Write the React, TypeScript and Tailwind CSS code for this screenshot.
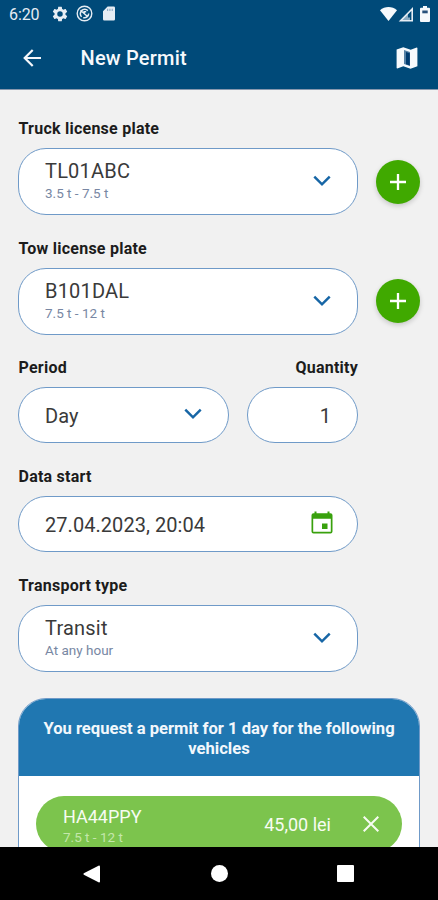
import React from "react";

type IconProps = { className?: string };

function Chevron({ className = "" }: IconProps) {
  return (
    <svg className={className} width="18" height="12" viewBox="0 0 18 12" fill="none" stroke="#1766a6" strokeWidth="2.5">
      <path d="M1.3 1.6 9 9.3l7.7-7.7" />
    </svg>
  );
}

function StatusBar() {
  return (
    <div className="flex h-7 items-center pl-[9px] pr-[8px] text-[#e6edf4]">
      <span className="mt-px w-[31px] whitespace-nowrap text-[16px] leading-7 tracking-[-0.1px]">6:20</span>
      <svg className="ml-[12px] -mt-px" width="16" height="16" viewBox="1.500 1.500 21 21" fill="currentColor">
        <path fillRule="evenodd" d="M19.14 12.94c.04-.3.06-.61.06-.94 0-.32-.02-.64-.07-.94l2.03-1.58a.49.49 0 0 0 .12-.61l-1.92-3.32a.488.488 0 0 0-.59-.22l-2.39.96c-.5-.38-1.03-.7-1.62-.94l-.36-2.54a.484.484 0 0 0-.48-.41h-3.84c-.24 0-.43.17-.47.41l-.36 2.54c-.59.24-1.13.57-1.62.94l-2.39-.96a.48.48 0 0 0-.59.22L2.74 8.87c-.12.21-.08.47.12.61l2.03 1.58c-.05.3-.09.63-.09.94s.02.64.07.94l-2.03 1.58a.49.49 0 0 0-.12.61l1.92 3.32c.12.22.37.29.59.22l2.39-.96c.5.38 1.03.7 1.62.94l.36 2.54c.05.24.24.41.48.41h3.84c.24 0 .44-.17.47-.41l.36-2.54c.59-.24 1.13-.56 1.62-.94l2.39.96c.22.08.47 0 .59-.22l1.92-3.32c.12-.22.07-.47-.12-.61l-2.01-1.58zM12 15.6A3.6 3.6 0 1 1 12 8.4a3.6 3.6 0 0 1 0 7.2z" />
      </svg>
      <svg className="ml-[8px] -mt-px" width="17" height="17" viewBox="0 0 17 17" fill="none" stroke="currentColor">
        <circle cx="8.5" cy="8.5" r="7.3" strokeWidth="1.4" />
        <path d="M5.600 11.800A4.300 4.300 0 1 1 11.800 5.600M12.700 8.500a4.300 4.300 0 0 1-5.500 4.100M4.500 5.200l7.300 6.600M8.200 8.800V6.800h2" strokeWidth="1.500" />
      </svg>
      <svg className="ml-[10px] -mt-px" width="12" height="15" viewBox="0 0 13 15">
        <path d="M5 0h6.6A1.4 1.4 0 0 1 13 1.4v12.2a1.4 1.4 0 0 1-1.4 1.4H1.4A1.4 1.4 0 0 1 0 13.6V5z" fill="currentColor" />
        <path d="M5 2.3v2.500M7.5 2.3v2.500M10 2.3v2.500" stroke="#8ba9c4" strokeWidth="1.2" />
      </svg>
      <div className="ml-auto flex items-center">
        <svg width="17" height="14" viewBox="0 0 17 14">
          <path d="M0 3.3C4.8-1.1 12.2-1.1 17 3.3L8.5 14z" fill="#f6f9fc" />
        </svg>
        <svg className="ml-px" width="16" height="15" viewBox="0 0 16 15">
          <path d="M14.200 2v11.800H2.600z" fill="none" stroke="currentColor" strokeWidth="1.6" />
          <path d="M2 14 10 6v4.500h2V14z" fill="currentColor" opacity=".6" />
        </svg>
        <svg className="ml-[6px] -mt-px" width="10" height="16" viewBox="0 0 10 16">
          <path d="M3 0h4v1.8h2a1 1 0 0 1 1 1V15a1 1 0 0 1-1 1H1a1 1 0 0 1-1-1V2.800a1 1 0 0 1 1-1h2z" fill="#f6f9fc" />
          <path d="M2.300 4.500h5.400v2.800H2.300z" fill="#27507b" />
        </svg>
      </div>
    </div>
  );
}

function Label({ children }: { children: React.ReactNode }) {
  return <div className="h-5 whitespace-nowrap pl-[0.500px] text-[16px] font-bold leading-5 tracking-[0.240px] text-[#1c1c1c]">{children}</div>;
}

function SelectBox({ title, note }: { title: string; note: string }) {
  return (
    <div className="flex h-[67px] w-[340px] items-center justify-between rounded-[28px] border border-[#6f9ac8] bg-white pl-[26px] pr-[26px]">
      <div className="-mt-px">
        <div className="whitespace-nowrap text-[20px] leading-6 tracking-[0.2px] text-[#3a3a3a]">{title}</div>
        <div className="whitespace-nowrap text-[13.5px] leading-5 text-[#7887a3]">{note}</div>
      </div>
      <Chevron className="-mt-px" />
    </div>
  );
}

function AddButton() {
  return (
    <button className="flex size-11 items-center justify-center rounded-full bg-[#40a900] shadow-[0_2px_5px_rgba(0,0,0,0.18)]">
      <svg width="16" height="16" viewBox="0 0 16 16" stroke="white" strokeWidth="2.300">
        <path d="M8 0v16M0 8h16" />
      </svg>
    </button>
  );
}

export default function App() {
  return (
    <div className="flex h-[900px] w-[438px] flex-col overflow-hidden bg-[#f1f1f1] font-[Roboto,sans-serif]">
      <header className="h-[90px] shrink-0 border-b border-[#8798ae] bg-[#004a79]">
        <StatusBar />
        <div className="flex h-[61px] items-center pl-[23px] pr-[20px]">
          <svg className="-mt-px" width="18" height="18" viewBox="0 0 18 18" fill="none" stroke="#f4f7fb" strokeWidth="2.2">
            <path d="M18 9H2M9.700 1 1.700 9l8 8" />
          </svg>
          <h1 className="-mt-px ml-[39.500px] text-[20px] font-medium leading-6 tracking-[0.2px] text-[#f6f9fc]">New Permit</h1>
          <svg className="-mt-px ml-auto" width="22" height="22" viewBox="0 0 22 22">
            <path d="M.6 2.400 7.300.3l7.400 2.400L20.700.4q.7 0 .7.700v18.200l-6.900 2.400-7.200-2.500-6 2.300q-.7 0-.7-.700z" fill="#f7fafd" />
            <path d="m8 2.900 6 2v14.100l-6-2.100z" fill="#5681a5" />
            <path d="m10 5 3.800 1.200v12.400L10 17.200z" fill="#003c70" />
          </svg>
        </div>
      </header>

      <main className="min-h-0 flex-1 overflow-hidden pl-[18px] pt-[29px]">
        <section className="h-[119.500px]">
          <Label>Truck license plate</Label>
          <div className="mt-[9px] flex items-center gap-[18px]">
            <SelectBox title="TL01ABC" note="3.5 t - 7.5 t" />
            <AddButton />
          </div>
        </section>
        <section className="h-[119.500px]">
          <Label>Tow license plate</Label>
          <div className="mt-[9px] flex items-center gap-[18px]">
            <SelectBox title="B101DAL" note="7.5 t - 12 t" />
            <AddButton />
          </div>
        </section>
        <section className="h-[109px] w-[340px]">
          <div className="flex justify-between">
            <Label>Period</Label>
            <Label>Quantity</Label>
          </div>
          <div className="mt-[9px] flex gap-[18px]">
            <div className="flex h-14 w-[211px] items-center justify-between rounded-[28px] border border-[#6f9ac8] bg-white pl-[26px] pr-[26px]">
              <span className="mt-0.5 text-[20px] leading-6 tracking-[0.1px] text-[#3a3a3a]">Day</span>
              <Chevron className="-mt-[2px]" />
            </div>
            <div className="flex h-14 w-[111px] items-center justify-end rounded-[28px] border border-[#6f9ac8] bg-white pr-[26px]">
              <span className="mt-0.5 text-[20px] leading-6 text-[#3a3a3a]">1</span>
            </div>
          </div>
        </section>
        <section className="h-[109px]">
          <Label>Data start</Label>
          <div className="mt-[9px] flex h-14 w-[340px] items-center justify-between rounded-[28px] border border-[#6f9ac8] bg-white pl-[26px] pr-[24px]">
            <span className="mt-0.5 whitespace-nowrap text-[20px] leading-6 tracking-[0.05px] text-[#3a3a3a]">27.04.2023, 20:04</span>
            <svg className="-mt-[3px]" width="22" height="23" viewBox="0 0 22 23">
              <path fillRule="evenodd" fill="#39a10d" d="M3.500.5h2v1.800h11V.5h2v1.800h1A2 2 0 0 1 21.500 4.300V20.500a2 2 0 0 1-2 2h-17a2 2 0 0 1-2-2V4.300a2 2 0 0 1 2-2h1zM2.200 7.700v13.100h17.600V7.700zM11 12.500h5.500v5.500H11z" />
            </svg>
          </div>
        </section>
        <section className="h-[122px]">
          <Label>Transport type</Label>
          <div className="mt-[9px]">
            <SelectBox title="Transit" note="At any hour" />
          </div>
        </section>

        <section className="h-[240px] w-[402px] overflow-hidden rounded-[28px] border border-[#6f9ac8] bg-white">
          <div className="-mx-px -mt-px flex h-[78px] items-center justify-center bg-[#2077b1] px-4 text-center text-[16.600px] font-bold leading-[19.500px] text-[#f2f7fc]">
            <p className="pt-[3px]">You request a permit for 1 day for the following<br />vehicles</p>
          </div>
          <div className="mx-[17px] mt-[20px] flex h-14 items-center rounded-[28px] bg-[#7cc44d] pl-[27px] pr-[23px] text-[#f7fcf2]">
            <div className="pt-[5px]">
              <div className="whitespace-nowrap text-[18px] leading-5">HA44PPY</div>
              <div className="whitespace-nowrap text-[13.500px] leading-5 text-[#c4e7ab]">7.5 t - 12 t</div>
            </div>
            <span className="mt-px ml-auto whitespace-nowrap text-[18px]">45,00 lei</span>
            <svg className="ml-[32px]" width="16" height="16" viewBox="0 0 16 16" stroke="currentColor" strokeWidth="2">
              <path d="m.7.7 14.600 14.600m0-14.600L.7 15.300" />
            </svg>
          </div>
        </section>
      </main>

      <nav className="flex h-[53px] shrink-0 items-center bg-black">
        <svg className="ml-[83px]" width="17" height="18" viewBox="0 0 17 18" fill="white">
          <path d="M16 .5q1 0 1 1v15q0 1-1 1L.8 9.700Q0 9 .8 8.300z" />
        </svg>
        <span className="ml-[111px] size-[17px] rounded-full bg-white" />
        <span className="ml-[108.500px] size-[17px] rounded-[1px] bg-white" />
      </nav>
    </div>
  );
}
